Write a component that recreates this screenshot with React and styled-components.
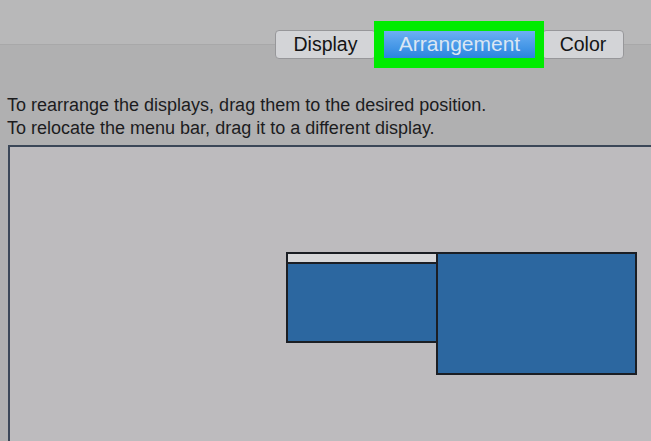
import styled, { createGlobalStyle } from 'styled-components';

const GlobalStyle = createGlobalStyle`
  html, body {
    margin: 0;
    padding: 0;
    background: #b0b0b1;
    font-family: "Liberation Sans", Arial, sans-serif;
    overflow: hidden;
  }
`;

const Window = styled.div`
  width: 651px;
  height: 441px;
  overflow: hidden;
  display: flex;
  flex-direction: column;
`;

const TopStrip = styled.div`
  height: 44px;
  background: #b8b8b9;
  border-bottom: 1px solid #a8a8a9;
`;

const TabRow = styled.div`
  margin-top: -24px;
  display: flex;
  justify-content: flex-end;
  align-items: center;
  padding-right: 27px;
  height: 47px;
`;

const Tab = styled.div`
  box-sizing: border-box;
  height: 29px;
  width: ${(p) => p.$width}px;
  padding-bottom: 1px;
  display: flex;
  align-items: center;
  justify-content: center;
  font-size: 19.5px;
  color: #141416;
  background: #d3d4d7;
  border: 1px solid #97979a;
  border-radius: 4px;
  margin-left: ${(p) => p.$overlap || 0}px;
`;

const Highlight = styled.div`
  box-sizing: border-box;
  width: 170px;
  height: 47px;
  border: 10px solid #00ec00;
  border-right-width: 9px;
  background: #00ec00;
  position: relative;
  z-index: 1;
  margin-left: -2px;
`;

const ActiveTab = styled.div`
  height: 100%;
  display: flex;
  align-items: center;
  justify-content: center;
  padding-bottom: 1px;
  box-sizing: border-box;
  font-size: 21px;
  color: #dbe6f3;
  background: linear-gradient(#6cb0f2, #2a85df);
`;

const Description = styled.p`
  margin: 26px 0 0 7px;
  font-size: 18px;
  line-height: 23px;
  color: #1c1c1e;
`;

const Canvas = styled.div`
  position: relative;
  margin: 5px -20px -20px 8px;
  flex: 1;
  background: #bdbbbe;
  border-top: 2px solid #3b4758;
  border-left: 2px solid #3b4758;
`;

const Screen = styled.div`
  position: absolute;
  box-sizing: border-box;
  left: ${(p) => p.$x}px;
  top: ${(p) => p.$y}px;
  width: ${(p) => p.$w}px;
  height: ${(p) => p.$h}px;
  background: #2c67a0;
  border: 2px solid #1b1e24;
  display: flex;
  flex-direction: column;
`;

const MenuBar = styled.div`
  height: 8px;
  background: #d7d7d9;
  border-bottom: 2px solid #1b1e24;
`;

export default function App() {
  return (
    <>
      <GlobalStyle />
      <Window>
        <TopStrip />
        <TabRow>
          <Tab $width={101}>Display</Tab>
          <Highlight>
            <ActiveTab>Arrangement</ActiveTab>
          </Highlight>
          <Tab $width={82} $overlap={-2}>Color</Tab>
        </TabRow>
        <Description>
          To rearrange the displays, drag them to the desired position.
          <br />
          To relocate the menu bar, drag it to a different display.
        </Description>
        <Canvas>
          <Screen $x={276} $y={105} $w={152} $h={91}>
            <MenuBar />
          </Screen>
          <Screen $x={426} $y={105} $w={201} $h={123} />
        </Canvas>
      </Window>
    </>
  );
}
